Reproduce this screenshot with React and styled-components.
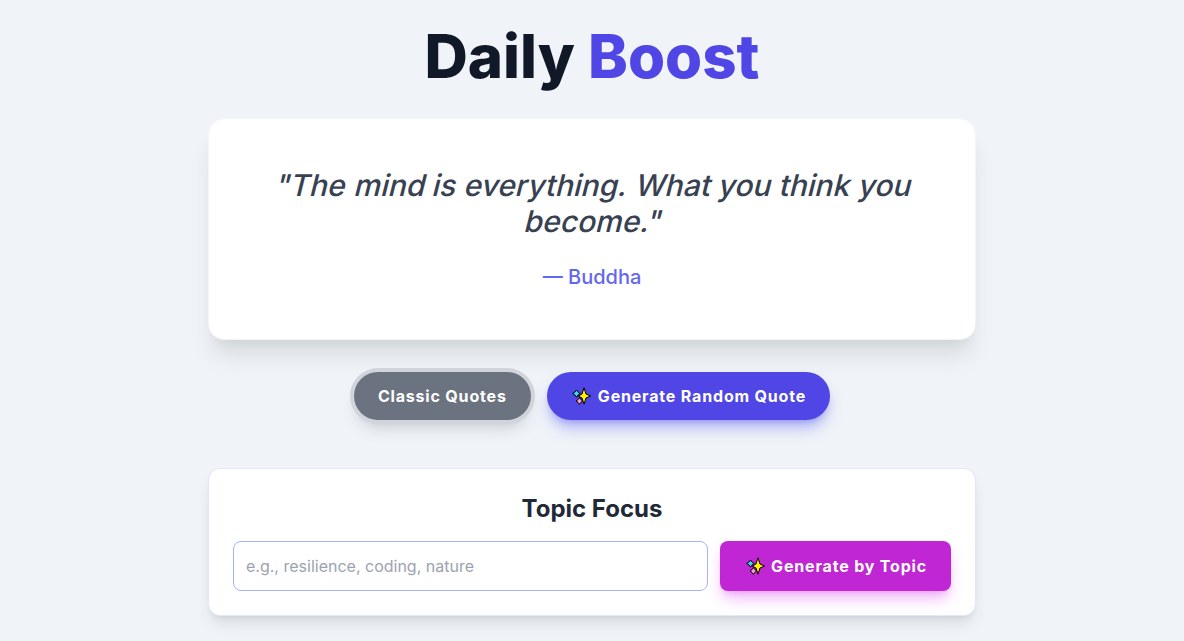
import React from 'react';
import styled, { createGlobalStyle } from 'styled-components';

const GlobalStyle = createGlobalStyle`
  *, *::before, *::after { box-sizing: border-box; }
  body {
    margin: 0;
    background: #f0f4f8;
    font-family: Inter, "Liberation Sans", sans-serif;
    line-height: 1.5;
  }
  h1, h2, p, blockquote { margin: 0; }
  button, input { font: inherit; }
`;

const Page = styled.div`
  min-height: 100vh;
  display: flex;
  flex-direction: column;
  align-items: center;
  justify-content: center;
`;

const Content = styled.main`
  width: 768px;
  text-align: center;
`;

const Title = styled.h1`
  font-size: 60px;
  line-height: 60px;
  font-weight: 800;
  color: #111827;
  margin-bottom: 32px;
`;

const Accent = styled.span`
  color: #4f46e5;
`;

const QuoteCard = styled.section`
  padding: 48px;
  margin-bottom: 32px;
  background: #fff;
  border: 1px solid #f3f4f6;
  border-radius: 16px;
  box-shadow: 0 20px 25px -5px rgba(0, 0, 0, 0.1), 0 10px 10px -5px rgba(0, 0, 0, 0.04);
`;

const Quote = styled.blockquote`
  font-size: 30px;
  line-height: 36px;
  font-weight: 500;
  color: #374151;
  margin-bottom: 24px;
`;

/* Slants the upright face around its baseline, keeping the two-storey "a". */
const SlantedWord = styled.span`
  display: inline-block;
  transform: skewX(-14deg);
  transform-origin: 0 29px;
`;

const Author = styled.p`
  font-size: 20px;
  line-height: 28px;
  font-weight: 500;
  color: #6366f1;
`;

const Actions = styled.div`
  display: flex;
  justify-content: center;
  gap: 16px;
  margin-bottom: 48px;
`;

const Button = styled.button`
  display: block;
  padding: 12px 24px;
  border: 0;
  border-radius: ${(p) => (p.$square ? '8px' : '9999px')};
  background: ${(p) => p.$color};
  box-shadow: ${(p) => (p.$ring ? `0 0 0 4px ${p.$ring}, ` : '')}
    0 10px 15px -3px ${(p) => p.$glow}, 0 4px 6px -4px ${(p) => p.$glow};
  color: #fff;
  font-size: 16px;
  line-height: 24px;
  font-weight: 700;
  letter-spacing: 0.82px;
  white-space: nowrap;
  cursor: pointer;
`;

const SparkleIcon = styled.svg`
  display: inline-block;
  width: 22px;
  height: 20px;
  margin-left: 0.5px;
  vertical-align: -4px;
`;

const TopicCard = styled.section`
  padding: 24px;
  background: #fff;
  border: 1px solid #e0e7ff;
  border-radius: 12px;
  box-shadow: 0 10px 15px -3px rgba(0, 0, 0, 0.1), 0 4px 6px -4px rgba(0, 0, 0, 0.1);
`;

const TopicTitle = styled.h2`
  font-size: 24px;
  line-height: 32px;
  font-weight: 700;
  color: #1f2937;
  margin-bottom: 16px;
`;

const TopicForm = styled.div`
  display: flex;
  gap: 12px;
`;

const TopicInput = styled.input`
  flex: 1;
  min-width: 0;
  height: 50px;
  padding: 12px;
  border: 1px solid #a5b4fc;
  border-radius: 8px;
  background: #fff;
  color: #1f2937;
  font-size: 16px;
  line-height: 24px;
  outline: none;
  &::placeholder { color: #9ca3af; opacity: 1; }
`;

function Sparkles() {
  return (
    <SparkleIcon viewBox="0 0 22 20" aria-hidden="true">
      <g stroke="#000" strokeWidth="1" strokeLinejoin="round">
        <path fill="#3ad8fa" d="M5.5 4 L7.1 6.1 L9.2 7.5 L7.1 8.9 L5.5 11.2 L3.9 8.9 L1.7 7.5 L3.9 6.1 Z" />
        <path fill="#f8a0c4" d="M8.4 11.6 L9.8 13.6 L11.8 15 L9.8 16.4 L8.4 18.4 L7 16.4 L5 15 L7 13.6 Z" />
        <path fill="#fff100" d="M13 1.8 L15 8 L19.6 10 L15 12 L13 18.2 L11 12 L7.2 10 L11 8 Z" />
      </g>
    </SparkleIcon>
  );
}

function SlantedText({ children }) {
  return children.split(' ').map((word, i) => (
    <React.Fragment key={i}>
      {i > 0 && ' '}
      <SlantedWord>{word}</SlantedWord>
    </React.Fragment>
  ));
}

export default function App() {
  return (
    <Page>
      <GlobalStyle />
      <Content>
        <Title>Daily <Accent>Boost</Accent></Title>
        <QuoteCard>
          <Quote><SlantedText>"The mind is everything. What you think you become."</SlantedText></Quote>
          <Author>— Buddha</Author>
        </QuoteCard>
        <Actions>
          <Button $color="#6b7280" $ring="#d1d5db" $glow="rgba(107, 114, 128, 0.3)">Classic Quotes</Button>
          <Button $color="#4f46e5" $glow="rgba(99, 102, 241, 0.5)"><Sparkles /> Generate Random Quote</Button>
        </Actions>
        <TopicCard>
          <TopicTitle>Topic Focus</TopicTitle>
          <TopicForm>
            <TopicInput placeholder="e.g., resilience, coding, nature" />
            <Button $square $color="#c026d3" $glow="rgba(217, 70, 239, 0.4)"><Sparkles /> Generate by Topic</Button>
          </TopicForm>
        </TopicCard>
      </Content>
    </Page>
  );
}
